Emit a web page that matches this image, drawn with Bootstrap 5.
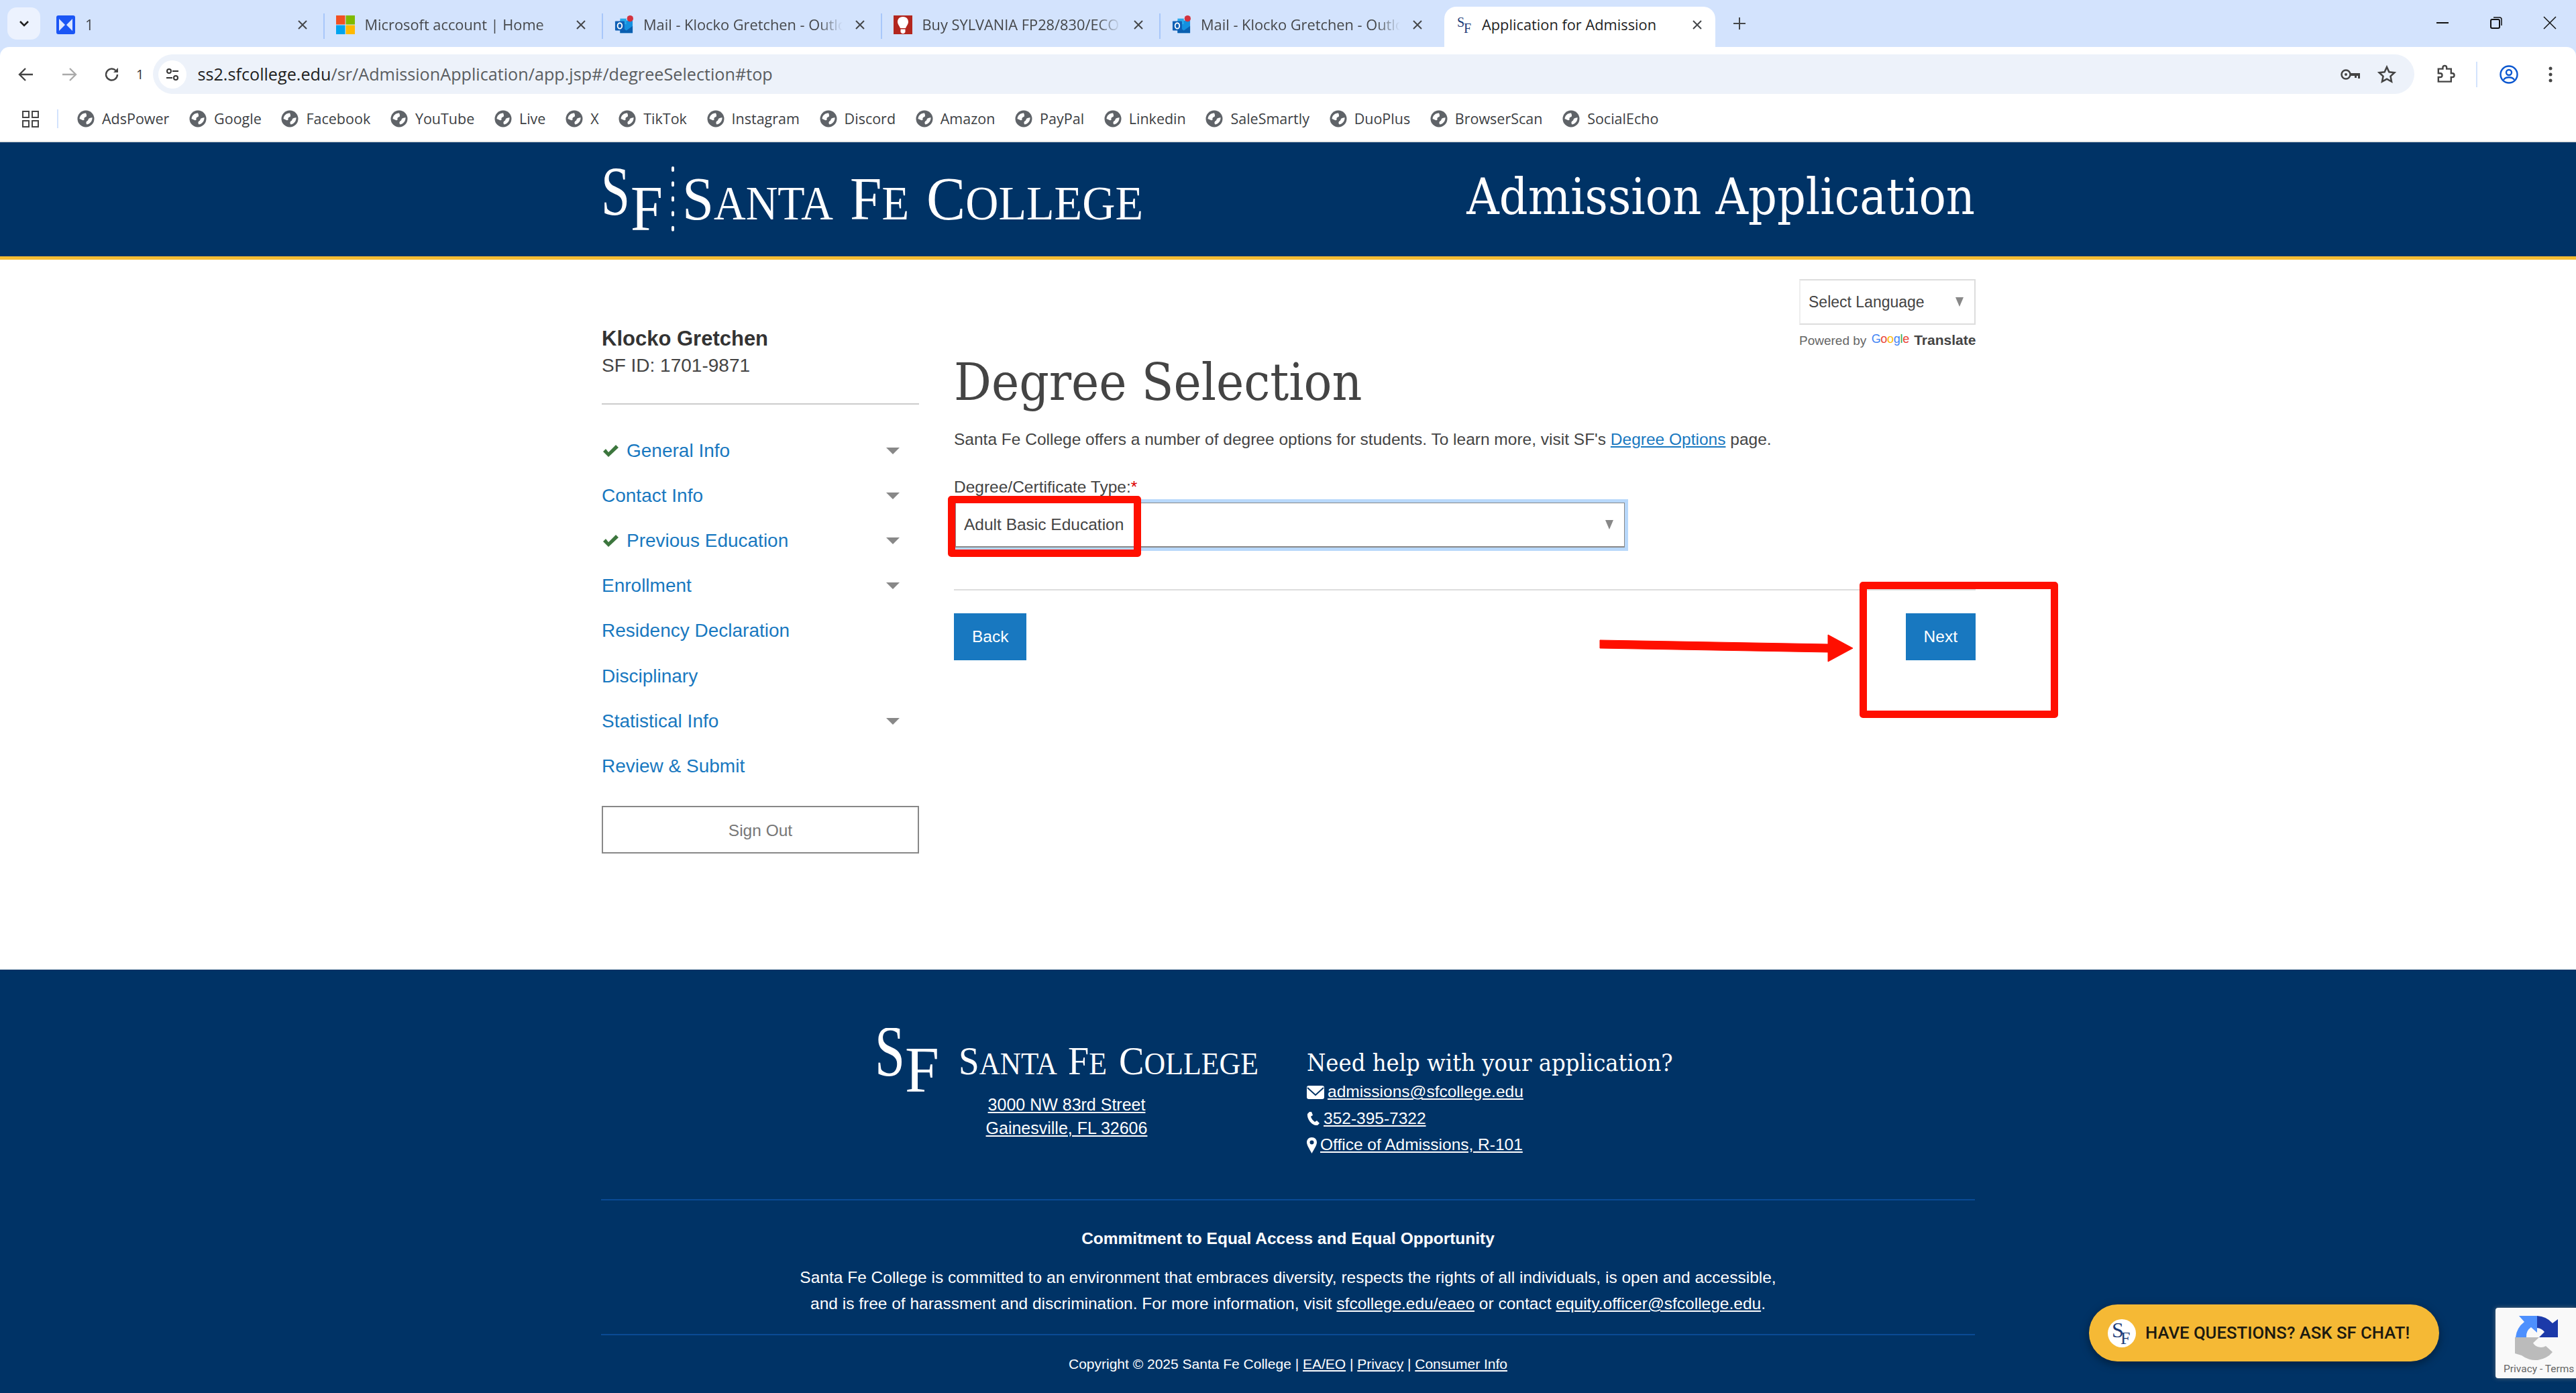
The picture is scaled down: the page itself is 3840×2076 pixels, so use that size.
<!DOCTYPE html>
<html lang="en">
<head>
    <meta charset="UTF-8">
    <meta name="viewport" content="width=device-width, initial-scale=1.0">
    <title>Application for Admission</title>
    <link href="https://cdn.jsdelivr.net/npm/bootstrap@5.3.0/dist/css/bootstrap.min.css" rel="stylesheet">
    <style>
        html, body { height: 2076px; overflow: hidden; }
        body { font-family: "Liberation Sans", Arial, sans-serif; font-size: 24.5px; color: #444; background: #fff; position: relative; }

        /* browser chrome */
        .chrome { font-family: "Open Sans", "Noto Sans", sans-serif; background: #d3e3fd; height: 212px; color: #333; border-bottom: 2px solid #e6e6e6; }
        .tabstrip { height: 70px; position: relative; }
        .tab-toggle { width: 49px; height: 48px; margin: 11px 0 0 11px; background: #ecf2fe; border-radius: 14px; }
        .tab-row { margin-left: 7px; padding-top: 10px; height: 70px; }
        .tab-item { width: 415.5px; height: 60px; padding: 0 22px 6px 18px; position: relative; font-size: 21.8px; color: #45474a; }
        .tab-item:first-child { padding-left: 17px; }
        .tab-item + .tab-item::before { content: ""; position: absolute; left: -1px; top: 10px; height: 38px; width: 2px; background: #a8c7fa; }
        .tab-item.tab-on { background: #fff; color: #1f1f1f; border-radius: 18px 18px 0 0; width: 404px; margin-left: 8.5px; padding-left: 18px; padding-right: 17px; }
        .tab-item.tab-on::before { display: none; }
        .tab-title { flex: 1; white-space: nowrap; overflow: hidden; margin: 0 16px 0 15px; -webkit-mask-image: linear-gradient(to right, #000 88%, transparent); mask-image: linear-gradient(to right, #000 88%, transparent); }
        .tab-on .tab-title { margin-left: 10px; -webkit-mask-image: none; mask-image: none; }
        .fav { width: 28px; height: 28px; flex: none; }
        .tab-new { margin-left: 26px; margin-top: -10px; }
        .win-btns { right: 29px; top: 24px; gap: 60px; }
        .toolbar { height: 70px; background: #fff; border-radius: 14px 14px 0 0; padding-left: 27px; padding-top: 11px; }
        .tool-ico { flex: none; display: block; }
        .tool-gap { margin-left: 40px; }
        .addr { background: #edf2fa; height: 59px; margin-left: 14px; width: 3371px; border-radius: 30px; padding: 0 27px 0 8px; flex: none; font-size: 25.2px; color: #5a5d60; }
        .addr b { font-weight: 400; color: #1f1f1f; }
        .site-pill { width: 42px; height: 42px; background: #fff; border-radius: 50%; margin-right: 16px; flex: none; }
        .reload-num { font-size: 20px; margin-left: 24px; }
        .ext-ico { margin-left: 32px; }
        .tool-sep { width: 2px; height: 38px; background: #d3e3fd; margin: 0 33px 0 30px; flex: none; }
        .dots-ico { margin-left: 44px; }
        .bookbar { height: 70px; background: #fff; padding: 4px 0 0 33px; font-size: 21.5px; color: #3c4043; }
        .book-sep { width: 2px; height: 28px; background: #d3e3fd; margin: 0 28px 0 27px; }
        .book-item { margin-right: 29.7px; gap: 11px; white-space: nowrap; }
        .book-item svg { width: 26px; height: 26px; flex: none; }

        /* site header */
        .site-head { height: 175px; background: #036; border-bottom: 5px solid #f6bd33; }
        .page-wrap { width: 2048px; margin: 0 auto; }
        .slab { font-family: "DejaVu Serif", "Liberation Serif", serif; font-stretch: condensed; }
        .head-title { color: #fff; font-size: 74.5px; line-height: 1; margin: 0 0 6px; font-weight: 400; }

        /* body */
        .body-area { height: 1058px; }
        .side-col { width: 473px; padding-top: 98px; flex: none; margin: 0 52px 0 1px; }
        .who-name { font-size: 31px; font-weight: 700; line-height: 40px; color: #333; }
        .who-id { font-size: 28px; line-height: 40px; color: #444; padding-bottom: 36px; border-bottom: 2px solid #ccc; margin-bottom: 35px; }
        .step-link { height: 67.2px; color: #1878c0; font-size: 28px; text-decoration: none; }
        .step-caret { margin-left: auto; margin-right: 29px; width: 0; height: 0; border-left: 10px solid transparent; border-right: 10px solid transparent; border-top: 10px solid #888; }
        .step-check { width: 25px; height: 20px; margin-right: 11px; margin-left: 1px; }
        .sign-out { display: block; width: 100%; height: 71px; line-height: 69px; padding: 0; margin-top: 25px; border: 2px solid #888; border-radius: 0; color: #777; font-size: 24.5px; background: #fff; }
        .main-col { width: 1523px; padding-top: 29px; flex: none; }
        .lang-box { width: 263px; }
        .lang-select, .degree-select { font-family: "Liberation Sans", Arial, sans-serif; color: #444; border-radius: 0; background-repeat: no-repeat; box-shadow: none; padding: 0 12px; background-image: url("data:image/svg+xml,%3csvg xmlns='http://www.w3.org/2000/svg' viewBox='0 0 12 14'%3e%3cpath fill='%23888' d='M0 0h12L6 14z'/%3e%3c/svg%3e"); background-size: 12px 14px; }
        .lang-select { height: 68px; font-size: 23px; border: 2px solid #ddd; border-left-color: #eee; background-position: right 16px center; padding-right: 40px; }
        .powered { font-size: 19px; line-height: 24px; margin-top: 11px; color: #666; white-space: nowrap; }
        .powered b { color: #444; font-size: 21px; }
        .goog { font-size: 18px; letter-spacing: -0.3px; position: relative; top: -3px; margin: 0 2px; }
        .page-title { font-size: 77.5px; line-height: 90px; margin: 4px 0 0; font-weight: 400; color: #444; }
        .intro { line-height: 36px; margin: 23px 0 0; }
        .intro a { color: #1878c0; }
        .degree-label { line-height: 30px; margin: 38px 0 8px; display: block; }
        .req-star { color: #d00; }
        .degree-select { width: 998px; height: 67px; font-size: 24.5px; margin-left: 2px; border: 1px solid #888; border-bottom-width: 2px; box-shadow: 0 0 0 5px #b8d8fb; background-position: right 16px center; }
        .form-rule { height: 2px; background: #ddd; margin: 62px 0 34px; }
        .blue-btn { height: 70px; padding: 0 27px; background: #1878c0; border: 0; border-radius: 0; font-size: 24.5px; color: #fff; }
        .blue-btn:hover { background: #1878c0; color: #fff; }

        /* footer */
        .site-foot { height: 631px; background: #036; color: #fff; }
        .site-foot a { color: #fff; }
        .foot-top { height: 344px; padding-top: 87px; border-bottom: 2px solid #0a4a94; }
        .foot-logo-col { width: 572px; margin-right: 72px; text-align: center; }
        .foot-addr { font-size: 25px; line-height: 35px; margin-top: 1px; }
        .foot-help { width: 588px; padding-top: 30px; }
        .foot-help h3 { font-size: 36px; line-height: 44px; margin: 0 0 2px; font-weight: 400; }
        .help-row { height: 39.5px; gap: 5px; }
        .foot-mid { text-align: center; padding-top: 40px; height: 201px; border-bottom: 2px solid #0a4a94; }
        .foot-mid h4 { font-size: 24.5px; line-height: 34px; font-weight: 700; margin: 0 0 21px; }
        .foot-mid p { line-height: 39px; margin: 0; }
        .foot-low { text-align: center; font-size: 21px; line-height: 30px; padding-top: 28px; }

        /* things over the page */
        .mark-box { position: absolute; border: 11px solid #ff0f00; border-radius: 5px; pointer-events: none; }
        .mark-a { left: 1413px; top: 739px; width: 288px; height: 91px; }
        .mark-b { left: 2772px; top: 867px; width: 296px; height: 203px; }
        .mark-arrow { position: absolute; left: 2380px; top: 940px; }
        .chat-pill { position: absolute; left: 3114px; top: 1944px; width: 522px; height: 85px; background: #f5b935; border-radius: 43px; box-shadow: 0 4px 14px rgba(0,0,0,.4); padding-left: 28px; gap: 14px; font-family: Roboto, sans-serif; font-size: 25.7px; font-weight: 500; color: #1c1a10; white-space: nowrap; }
        .chat-sf { width: 42px; height: 42px; flex: none; }
        .captcha-box { position: absolute; left: 3720px; top: 1949px; width: 120px; height: 105px; background: #f9f9f9; border-radius: 4px 0 0 4px; box-shadow: 0 0 6px rgba(130,130,130,.7); font-family: Roboto, sans-serif; font-size: 15.5px; color: #666; }
        .captcha-box svg { display: block; margin: 1px 0 0 5px; }
        .captcha-txt { padding-left: 12px; line-height: 20px; white-space: nowrap; }
    </style>
</head>

<body>
    <svg width="0" height="0" class="position-absolute">
        <defs>
            <symbol id="globe" viewBox="0 0 26 26">
                <circle cx="13" cy="13" r="12.500" fill="#5f6368"/>
                <path fill="#fff" d="M3.500 13C4 8 8 4.500 13 4.500c1 2 1.500 4 .5 5.500-2 .5-3.500 1.500-3 3.500.5 1.500-1 2-2.500 1.500-1.500-.5-3-1.500-4.500-2z"/>
                <path fill="#fff" d="M22.500 11c.5 5-3 9.500-8 10.500-1.500-1.500-1.500-3.500 0-5 1.500-.5 2-2 2.500-3.500 1.500-1 3.500-1.500 5.500-2z"/>
            </symbol>
            <symbol id="closex" viewBox="0 0 20 20">
                <path d="M4 4l12 12M16 4L4 16" stroke="#45474a" stroke-width="2" fill="none"/>
            </symbol>
            <symbol id="outlook" viewBox="0 0 30 30">
                <path fill="#1490df" d="M9 8h20v20H9z"/>
                <path fill="#0a5fb0" d="M29 17l-10 7L9 17v11h20z"/>
                <path fill="#28a8ea" d="M9 5h10v9H9z"/>
                <rect x="1" y="9" width="15" height="15" rx="1" fill="#0f5fb5"/>
                <ellipse cx="8.500" cy="16.500" rx="3.500" ry="4.500" fill="none" stroke="#fff" stroke-width="2"/>
                <circle cx="25" cy="5" r="5" fill="#d3333f"/>
            </symbol>
        </defs>
    </svg>

    <!-- browser top -->
    <div class="chrome">
        <div class="tabstrip d-flex">
            <div class="tab-toggle d-flex align-items-center justify-content-center">
                <svg width="16" height="10" viewBox="0 0 16 10"><path d="M2 2l6 6 6-6" stroke="#1f1f1f" stroke-width="2.500" fill="none"/></svg>
            </div>
            <div class="tab-row d-flex">
                <div class="tab-item d-flex align-items-center">
                    <svg class="fav" viewBox="0 0 28 28"><rect width="28" height="28" rx="3" fill="#1b56f5"/><path fill="#dce6ff" d="M4 5l9 9-9 9zM24 5l-9 9 9 9z"/></svg>
                    <span class="tab-title">1</span>
                    <svg width="20" height="20"><use href="#closex"/></svg>
                </div>
                <div class="tab-item d-flex align-items-center">
                    <svg class="fav" viewBox="0 0 28 28"><path fill="#f25022" d="M0 0h13.500v13.500H0z"/><path fill="#7fba00" d="M14.500 0H28v13.500H14.500z"/><path fill="#00a4ef" d="M0 14.500h13.500V28H0z"/><path fill="#ffb900" d="M14.500 14.500H28V28H14.500z"/></svg>
                    <span class="tab-title">Microsoft account | Home</span>
                    <svg width="20" height="20"><use href="#closex"/></svg>
                </div>
                <div class="tab-item d-flex align-items-center">
                    <svg class="fav"><use href="#outlook"/></svg>
                    <span class="tab-title">Mail - Klocko Gretchen - Outlook</span>
                    <svg width="20" height="20"><use href="#closex"/></svg>
                </div>
                <div class="tab-item d-flex align-items-center">
                    <svg class="fav" viewBox="0 0 28 28"><rect width="28" height="28" fill="#b3261e"/><path fill="#fff" d="M14 2c6 0 8 4 8 8 0 3-3 6-4 9h-8c-1-3-4-6-4-9 0-4 2-8 8-8zM10.500 20.500h7V25l-2 2h-3l-2-2z"/></svg>
                    <span class="tab-title">Buy SYLVANIA FP28/830/ECO T5</span>
                    <svg width="20" height="20"><use href="#closex"/></svg>
                </div>
                <div class="tab-item d-flex align-items-center">
                    <svg class="fav"><use href="#outlook"/></svg>
                    <span class="tab-title">Mail - Klocko Gretchen - Outlook</span>
                    <svg width="20" height="20"><use href="#closex"/></svg>
                </div>
                <div class="tab-item tab-on d-flex align-items-center">
                    <svg class="fav" viewBox="0 0 28 28">
                        <text x="1" y="17" font-family="Liberation Serif" font-size="20" fill="#1d3c78">S</text>
                        <text x="11" y="26" font-family="Liberation Serif" font-size="20" fill="#1d3c78">F</text>
                    </svg>
                    <span class="tab-title">Application for Admission</span>
                    <svg width="20" height="20"><use href="#closex"/></svg>
                </div>
                <svg class="tab-new align-self-center" width="20" height="20" viewBox="0 0 20 20"><path d="M10 1v18M1 10h18" stroke="#45474a" stroke-width="2" fill="none"/></svg>
            </div>
            <div class="win-btns d-flex align-items-center position-absolute">
                <svg width="20" height="20" viewBox="0 0 20 20"><path d="M1 10h18" stroke="#111" stroke-width="2"/></svg>
                <svg width="20" height="20" viewBox="0 0 20 20"><rect x="2" y="5" width="13" height="13" rx="2" fill="none" stroke="#111" stroke-width="2"/><path d="M6 2h9a3 3 0 0 1 3 3v9" fill="none" stroke="#111" stroke-width="1.500"/></svg>
                <svg width="20" height="20" viewBox="0 0 20 20"><path d="M1 1l18 18M19 1L1 19" stroke="#111" stroke-width="1.500"/></svg>
            </div>
        </div>
        <div class="toolbar d-flex align-items-center">
            <svg class="tool-ico" width="24" height="24" viewBox="0 0 24 24"><path d="M22 12H3M11 3l-9 9 9 9" stroke="#444" stroke-width="2.400" fill="none"/></svg>
            <svg class="tool-ico tool-gap" width="24" height="24" viewBox="0 0 24 24"><path d="M2 12h19M13 3l9 9-9 9" stroke="#aaa" stroke-width="2.400" fill="none"/></svg>
            <svg class="tool-ico tool-gap" width="24" height="24" viewBox="0 0 24 24"><path d="M20 12a8.500 8.500 0 1 1-2.500-6" stroke="#444" stroke-width="2.400" fill="none"/><path d="M21 2v7h-7z" fill="#444"/></svg>
            <span class="reload-num">1</span>
            <div class="addr d-flex align-items-center">
                <span class="site-pill d-flex align-items-center justify-content-center">
                    <svg width="24" height="24" viewBox="0 0 24 24"><circle cx="7" cy="7" r="3" fill="none" stroke="#333" stroke-width="2"/><path d="M12 7h9M3 17h9" stroke="#333" stroke-width="2"/><circle cx="17" cy="17" r="3" fill="none" stroke="#333" stroke-width="2"/></svg>
                </span>
                <span><b>ss2.sfcollege.edu</b>/sr/AdmissionApplication/app.jsp#/degreeSelection#top</span>
                <svg class="ms-auto" width="32" height="24" viewBox="0 0 32 24"><circle cx="9" cy="12" r="6.500" fill="none" stroke="#444" stroke-width="2.500"/><circle cx="9" cy="12" r="2" fill="#444"/><path d="M15 10h15v8h-3v-4h-2v3h-3v-3h-7z" fill="#444"/></svg>
                <svg class="ms-4" width="28" height="28" viewBox="0 0 24 24"><path d="M12 2.500l2.900 6.300 6.800.8-5 4.700 1.300 6.800L12 17.700 6 21.100l1.300-6.800-5-4.700 6.800-.8z" fill="none" stroke="#444" stroke-width="2.200"/></svg>
            </div>
            <svg class="tool-ico ext-ico" width="30" height="30" viewBox="0 0 30 30"><path d="M4 7h7V5a3 3 0 0 1 6 0v2h7v7h2a3 3 0 0 1 0 6h-2v7H4v-7h3a3 3 0 0 0 0-6H4z" fill="none" stroke="#444" stroke-width="2.500" transform="scale(.95)"/></svg>
            <span class="tool-sep"></span>
            <svg class="tool-ico" width="28" height="28" viewBox="0 0 28 28"><circle cx="14" cy="14" r="12.500" fill="none" stroke="#0b57d0" stroke-width="2.400"/><circle cx="14" cy="11" r="4" fill="none" stroke="#0b57d0" stroke-width="2.400"/><path d="M6 22c3-5 13-5 16 0" fill="none" stroke="#0b57d0" stroke-width="2.400"/></svg>
            <svg class="tool-ico dots-ico" width="8" height="26" viewBox="0 0 8 26"><circle cx="4" cy="4" r="2.500" fill="#444"/><circle cx="4" cy="13" r="2.500" fill="#444"/><circle cx="4" cy="22" r="2.500" fill="#444"/></svg>
        </div>
        <div class="bookbar d-flex align-items-center">
            <svg width="25" height="25" viewBox="0 0 25 25"><path d="M1 1h9v9H1zM15 1h9v9h-9zM1 15h9v9H1zM15 15h9v9h-9z" fill="none" stroke="#444" stroke-width="2"/></svg>
            <span class="book-sep"></span>
            <span class="book-item d-flex align-items-center"><svg><use href="#globe"/></svg>AdsPower</span>
            <span class="book-item d-flex align-items-center"><svg><use href="#globe"/></svg>Google</span>
            <span class="book-item d-flex align-items-center"><svg><use href="#globe"/></svg>Facebook</span>
            <span class="book-item d-flex align-items-center"><svg><use href="#globe"/></svg>YouTube</span>
            <span class="book-item d-flex align-items-center"><svg><use href="#globe"/></svg>Live</span>
            <span class="book-item d-flex align-items-center"><svg><use href="#globe"/></svg>X</span>
            <span class="book-item d-flex align-items-center"><svg><use href="#globe"/></svg>TikTok</span>
            <span class="book-item d-flex align-items-center"><svg><use href="#globe"/></svg>Instagram</span>
            <span class="book-item d-flex align-items-center"><svg><use href="#globe"/></svg>Discord</span>
            <span class="book-item d-flex align-items-center"><svg><use href="#globe"/></svg>Amazon</span>
            <span class="book-item d-flex align-items-center"><svg><use href="#globe"/></svg>PayPal</span>
            <span class="book-item d-flex align-items-center"><svg><use href="#globe"/></svg>Linkedin</span>
            <span class="book-item d-flex align-items-center"><svg><use href="#globe"/></svg>SaleSmartly</span>
            <span class="book-item d-flex align-items-center"><svg><use href="#globe"/></svg>DuoPlus</span>
            <span class="book-item d-flex align-items-center"><svg><use href="#globe"/></svg>BrowserScan</span>
            <span class="book-item d-flex align-items-center"><svg><use href="#globe"/></svg>SocialEcho</span>
        </div>
    </div>

    <!-- site header -->
    <header class="site-head">
        <div class="page-wrap h-100 d-flex align-items-center justify-content-between">
            <svg width="810" height="110" viewBox="0 0 810 110" font-family="Liberation Serif, serif" fill="#fff">
                <text x="0" y="78" font-size="103" textLength="43" lengthAdjust="spacingAndGlyphs">S</text>
                <text x="44" y="101" font-size="95" textLength="48" lengthAdjust="spacingAndGlyphs">F</text>
                <path d="M107 8v95" stroke="#fff" stroke-width="4" stroke-dasharray="4 18.200" stroke-linecap="round" fill="none"/>
                <text x="121" y="85" textLength="225" lengthAdjust="spacingAndGlyphs"><tspan font-size="91">S</tspan><tspan font-size="71">ANTA</tspan></text>
                <text x="371" y="85" textLength="88" lengthAdjust="spacingAndGlyphs"><tspan font-size="91">F</tspan><tspan font-size="71">E</tspan></text>
                <text x="485" y="85" textLength="323" lengthAdjust="spacingAndGlyphs"><tspan font-size="91">C</tspan><tspan font-size="71">OLLEGE</tspan></text>
            </svg>
            <h2 class="head-title slab">Admission Application</h2>
        </div>
    </header>

    <!-- page body -->
    <div class="body-area">
        <div class="page-wrap d-flex">
            <aside class="side-col">
                <div class="who-name">Klocko Gretchen</div>
                <div class="who-id">SF ID: 1701-9871</div>
                <nav class="nav flex-column">
                    <a class="step-link d-flex align-items-center" href="#"><svg class="step-check" viewBox="0 0 25 20"><path d="M1 11l4-4 4 5L20 1l4 4L9 19z" fill="#3c763d"/></svg>General Info<span class="step-caret"></span></a>
                    <a class="step-link d-flex align-items-center" href="#">Contact Info<span class="step-caret"></span></a>
                    <a class="step-link d-flex align-items-center" href="#"><svg class="step-check" viewBox="0 0 25 20"><path d="M1 11l4-4 4 5L20 1l4 4L9 19z" fill="#3c763d"/></svg>Previous Education<span class="step-caret"></span></a>
                    <a class="step-link d-flex align-items-center" href="#">Enrollment<span class="step-caret"></span></a>
                    <a class="step-link d-flex align-items-center" href="#">Residency Declaration</a>
                    <a class="step-link d-flex align-items-center" href="#">Disciplinary</a>
                    <a class="step-link d-flex align-items-center" href="#">Statistical Info<span class="step-caret"></span></a>
                    <a class="step-link d-flex align-items-center" href="#">Review &amp; Submit</a>
                </nav>
                <button type="button" class="btn sign-out">Sign Out</button>
            </aside>
            <main class="main-col">
                <div class="d-flex justify-content-end">
                    <div class="lang-box">
                        <select class="form-select lang-select"><option>Select Language</option></select>
                        <div class="powered">Powered by <span class="goog"><span style="color:#4285f4">G</span><span style="color:#ea4335">o</span><span style="color:#fbbc05">o</span><span style="color:#4285f4">g</span><span style="color:#34a853">l</span><span style="color:#ea4335">e</span></span> <b>Translate</b></div>
                    </div>
                </div>
                <h1 class="page-title slab">Degree Selection</h1>
                <p class="intro">Santa Fe College offers a number of degree options for students. To learn more, visit SF's <a href="#">Degree Options</a> page.</p>
                <label class="degree-label">Degree/Certificate Type:<span class="req-star">*</span></label>
                <select class="form-select degree-select"><option>Adult Basic Education</option></select>
                <div class="form-rule"></div>
                <div class="d-flex justify-content-between">
                    <button type="button" class="btn blue-btn">Back</button>
                    <button type="button" class="btn blue-btn">Next</button>
                </div>
            </main>
        </div>
    </div>

    <!-- footer -->
    <footer class="site-foot">
        <div class="page-wrap">
            <div class="foot-top d-flex justify-content-center">
                <div class="foot-logo-col">
                    <svg class="d-block" width="572" height="96" viewBox="0 0 572 96" font-family="Liberation Serif, serif" fill="#fff">
                        <text x="0" y="71" font-size="108" textLength="45" lengthAdjust="spacingAndGlyphs">S</text>
                        <text x="45" y="95" font-size="98" textLength="51" lengthAdjust="spacingAndGlyphs">F</text>
                        <text x="125" y="69" textLength="147" lengthAdjust="spacingAndGlyphs"><tspan font-size="59">S</tspan><tspan font-size="46">ANTA</tspan></text>
                        <text x="288" y="69" textLength="58" lengthAdjust="spacingAndGlyphs"><tspan font-size="59">F</tspan><tspan font-size="46">E</tspan></text>
                        <text x="364" y="69" textLength="208" lengthAdjust="spacingAndGlyphs"><tspan font-size="59">C</tspan><tspan font-size="46">OLLEGE</tspan></text>
                    </svg>
                    <div class="foot-addr"><a href="#">3000 NW 83rd Street</a><br><a href="#">Gainesville, FL 32606</a></div>
                </div>
                <div class="foot-help">
                    <h3 class="slab">Need help with your application?</h3>
                    <div class="help-row d-flex align-items-center">
                        <svg width="26" height="20" viewBox="0 0 26 20"><rect width="26" height="20" rx="3" fill="#fff"/><path d="M1 3l12 11L25 3" fill="none" stroke="#036" stroke-width="2"/></svg>
                        <a href="#">admissions@sfcollege.edu</a>
                    </div>
                    <div class="help-row d-flex align-items-center">
                        <svg width="20" height="22" viewBox="0 0 20 22"><path d="M4 1l3 0 2 5-3 2c1 3 3 6 6 8l3-2 4 4-3 3c-8 1-16-9-15-17z" fill="#fff"/></svg>
                        <a href="#">352-395-7322</a>
                    </div>
                    <div class="help-row d-flex align-items-center">
                        <svg width="15" height="24" viewBox="0 0 15 24"><path fill-rule="evenodd" d="M7.500 0C12 0 15 3 15 7.500 15 12 10 19 7.500 24 5 19 0 12 0 7.500 0 3 3 0 7.500 0zm0 4.500a3 3 0 1 0 0 6 3 3 0 0 0 0-6z" fill="#fff"/></svg>
                        <a href="#">Office of Admissions, R-101</a>
                    </div>
                </div>
            </div>
            <div class="foot-mid">
                <h4>Commitment to Equal Access and Equal Opportunity</h4>
                <p>Santa Fe College is committed to an environment that embraces diversity, respects the rights of all individuals, is open and accessible,<br>and is free of harassment and discrimination. For more information, visit <a href="#">sfcollege.edu/eaeo</a> or contact <a href="#">equity.officer@sfcollege.edu</a>.</p>
            </div>
            <div class="foot-low">Copyright © 2025 Santa Fe College | <a href="#">EA/EO</a> | <a href="#">Privacy</a> | <a href="#">Consumer Info</a></div>
        </div>
    </footer>

    <!-- annotations drawn on the screenshot -->
    <div class="mark-box mark-a"></div>
    <div class="mark-box mark-b"></div>
    <svg class="mark-arrow" width="384" height="52" viewBox="0 0 384 52"><path d="M5 14l340 6v-14l37 20-37 20v-14L5 26z" fill="#ff0f00" stroke="#ff0f00" stroke-linejoin="round"/></svg>

    <!-- chat and captcha widgets -->
    <div class="chat-pill d-flex align-items-center">
        <svg class="chat-sf" viewBox="0 0 42 42">
            <circle cx="21" cy="21" r="21" fill="#fff"/>
            <text x="6" y="27" font-family="Liberation Serif" font-size="32" fill="#1d3c78">S</text>
            <text x="19" y="37" font-family="Liberation Serif" font-size="26" fill="#1d3c78">F</text>
        </svg>
        <span>HAVE QUESTIONS? ASK SF CHAT!</span>
    </div>
    <div class="captcha-box">
        <svg width="100" height="80" viewBox="0 0 100 80">
            <path d="M57 11V36l-9-8A16 16 0 0 0 41 43H25A33 33 0 0 1 38 20L30 11z" fill="#4d90fe"/>
            <path d="M57 11A33 33 0 0 1 80 22l8-6V43H60l8-8A16 16 0 0 0 57 29z" fill="#1c3aa9"/>
            <path d="M24 43H60l-9 8.500A14 14 0 0 0 70 56l10 9A33 33 0 0 1 34 70L24 67z" fill="#bbb"/>
        </svg>
        <div class="captcha-txt">Privacy - Terms</div>
    </div>

    <script src="https://cdn.jsdelivr.net/npm/bootstrap@5.3.0/dist/js/bootstrap.bundle.min.js"></script>
</body>
</html>
